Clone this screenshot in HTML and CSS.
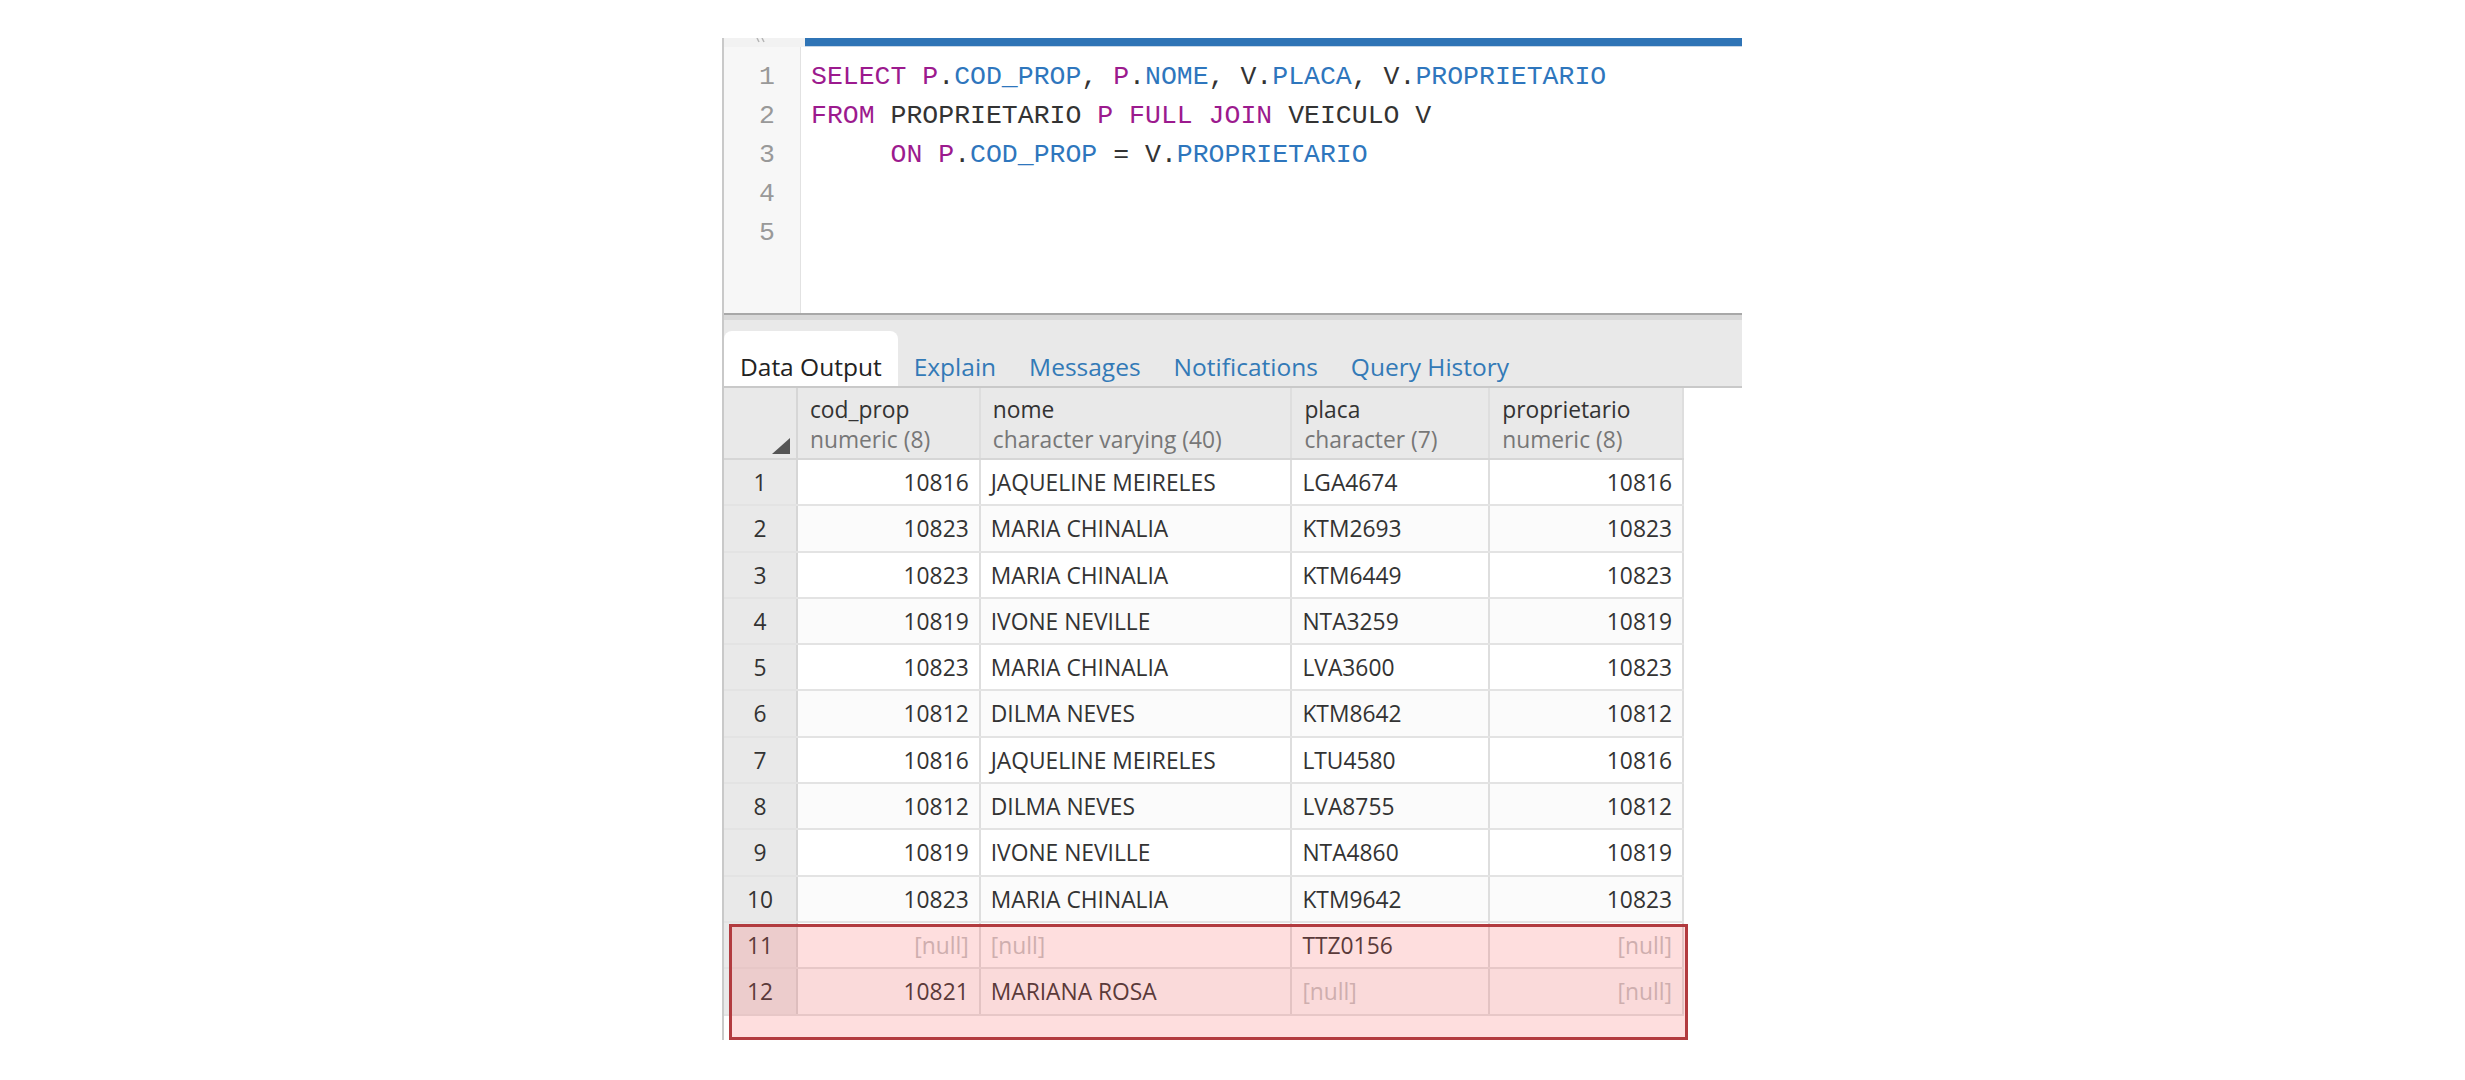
FILE: index.html
```html
<!DOCTYPE html>
<html>
<head>
<meta charset="utf-8">
<link rel="stylesheet" href="styles.css">
</head>
<body>
<div class="panel">
  <div class="editor-top">
    <div class="top-gutter">
      <svg class="collapse" width="12" height="6" viewBox="0 0 12 6"><path d="M1 0 L3 4 M6 0 L8 4" stroke="#b5b5b5" stroke-width="1.5" fill="none"/></svg>
    </div>
    <div class="top-bar"></div>
  </div>
  <div class="editor">
    <div class="gutter">
      <div class="ln">1</div>
      <div class="ln">2</div>
      <div class="ln">3</div>
      <div class="ln">4</div>
      <div class="ln">5</div>
    </div>
    <div class="code">
      <div class="line"><span class="kw">SELECT</span> <span class="kw">P</span>.<span class="col">COD_PROP</span>, <span class="kw">P</span>.<span class="col">NOME</span>, V.<span class="col">PLACA</span>, V.<span class="col">PROPRIETARIO</span></div>
      <div class="line"><span class="kw">FROM</span> PROPRIETARIO <span class="kw">P</span> <span class="kw">FULL</span> <span class="kw">JOIN</span> VEICULO V</div>
      <div class="line">     <span class="kw">ON</span> <span class="kw">P</span>.<span class="col">COD_PROP</span> = V.<span class="col">PROPRIETARIO</span></div>
      <div class="line"></div>
      <div class="line"></div>
    </div>
  </div>
  <div class="divider"></div>
  <div class="tabs">
    <div class="tab active">Data Output</div>
    <div class="tab">Explain</div>
    <div class="tab">Messages</div>
    <div class="tab">Notifications</div>
    <div class="tab">Query History</div>
  </div>
  <div class="grid">
    <div class="row head">
      <div class="cell num corner"><span class="tri"></span></div>
      <div class="cell c1"><div class="hname">cod_prop</div><div class="htype">numeric (8)</div></div>
      <div class="cell c2"><div class="hname">nome</div><div class="htype">character varying (40)</div></div>
      <div class="cell c3"><div class="hname">placa</div><div class="htype">character (7)</div></div>
      <div class="cell c4"><div class="hname">proprietario</div><div class="htype">numeric (8)</div></div>
    </div>
    <div class="row"><div class="cell num">1</div><div class="cell c1 r">10816</div><div class="cell c2">JAQUELINE MEIRELES</div><div class="cell c3">LGA4674</div><div class="cell c4 r">10816</div></div>
    <div class="row even"><div class="cell num">2</div><div class="cell c1 r">10823</div><div class="cell c2">MARIA CHINALIA</div><div class="cell c3">KTM2693</div><div class="cell c4 r">10823</div></div>
    <div class="row"><div class="cell num">3</div><div class="cell c1 r">10823</div><div class="cell c2">MARIA CHINALIA</div><div class="cell c3">KTM6449</div><div class="cell c4 r">10823</div></div>
    <div class="row even"><div class="cell num">4</div><div class="cell c1 r">10819</div><div class="cell c2">IVONE NEVILLE</div><div class="cell c3">NTA3259</div><div class="cell c4 r">10819</div></div>
    <div class="row"><div class="cell num">5</div><div class="cell c1 r">10823</div><div class="cell c2">MARIA CHINALIA</div><div class="cell c3">LVA3600</div><div class="cell c4 r">10823</div></div>
    <div class="row even"><div class="cell num">6</div><div class="cell c1 r">10812</div><div class="cell c2">DILMA NEVES</div><div class="cell c3">KTM8642</div><div class="cell c4 r">10812</div></div>
    <div class="row"><div class="cell num">7</div><div class="cell c1 r">10816</div><div class="cell c2">JAQUELINE MEIRELES</div><div class="cell c3">LTU4580</div><div class="cell c4 r">10816</div></div>
    <div class="row even"><div class="cell num">8</div><div class="cell c1 r">10812</div><div class="cell c2">DILMA NEVES</div><div class="cell c3">LVA8755</div><div class="cell c4 r">10812</div></div>
    <div class="row"><div class="cell num">9</div><div class="cell c1 r">10819</div><div class="cell c2">IVONE NEVILLE</div><div class="cell c3">NTA4860</div><div class="cell c4 r">10819</div></div>
    <div class="row even"><div class="cell num">10</div><div class="cell c1 r">10823</div><div class="cell c2">MARIA CHINALIA</div><div class="cell c3">KTM9642</div><div class="cell c4 r">10823</div></div>
    <div class="row"><div class="cell num">11</div><div class="cell c1 r null">[null]</div><div class="cell c2 null">[null]</div><div class="cell c3">TTZ0156</div><div class="cell c4 r null">[null]</div></div>
    <div class="row even"><div class="cell num">12</div><div class="cell c1 r">10821</div><div class="cell c2">MARIANA ROSA</div><div class="cell c3 null">[null]</div><div class="cell c4 r null">[null]</div></div>
  </div>
  <div class="highlight"></div>
</div>
</body>
</html>
```
FILE: styles.css
```css
html, body {
  margin: 0;
  padding: 0;
  background: #ffffff;
}
body {
  font-family: "Open Sans", "Liberation Sans", sans-serif;
  color: #333;
}
.panel {
  position: relative;
  margin-left: 722px;
  margin-top: 38px;
  width: 1018px;
  height: 1002px;
  border-left: 2px solid #c9c9c9;
}
.editor-top {
  display: flex;
  height: 9px;
}
.top-gutter {
  width: 81px;
  background: #f2f2f2;
  overflow: hidden;
}
.collapse {
  display: block;
  margin-left: 32px;
}
.top-bar {
  flex: 1;
  background: #2f74b6;
  border-bottom: 1px solid #c7d6e6;
}
.editor {
  display: flex;
  height: 266px;
}
.gutter {
  width: 76px;
  background: #f7f7f7;
  border-right: 1px solid #e2e2e2;
  padding-top: 11px;
}
.ln {
  font-family: "Liberation Mono", monospace;
  font-size: 26.5px;
  line-height: 39px;
  height: 39px;
  color: #999;
  text-align: right;
  padding-right: 25px;
}
.code {
  flex: 1;
  padding-top: 11px;
  padding-left: 10px;
  font-family: "Liberation Mono", monospace;
  font-size: 26.5px;
  color: #333;
}
.line {
  height: 39px;
  line-height: 39px;
  white-space: pre;
}
.kw {
  color: #9c1a8e;
}
.col {
  color: #2e76bd;
}
.divider {
  height: 5px;
  border-top: 2px solid #a8a8a8;
  background: #d9d9d9;
}
.tabs {
  display: flex;
  align-items: flex-end;
  height: 68px;
  background: #e9e9e9;
  border-bottom: 2px solid #c9c9c9;
  box-sizing: border-box;
}
.tab {
  font-size: 24.5px;
  color: #337ab7;
  height: 55px;
  box-sizing: border-box;
  padding: 19px 16px 0;
  margin-right: 1px;
  line-height: 33px;
  white-space: nowrap;
}
.tab.active {
  background: #fff;
  color: #222;
  border-radius: 8px 8px 0 0;
  margin-right: 0;
}
.grid {
  width: 960px;
}
.row {
  display: flex;
  height: 46.3px;
  box-sizing: border-box;
  border-bottom: 2px solid #e3e3e3;
  background: #fff;
}
.row.even {
  background: #fbfbfb;
}
.row.head {
  height: 72px;
  background: #e9e9e9;
  border-bottom: 2px solid #d6d6d6;
}
.cell {
  box-sizing: border-box;
  border-right: 2px solid #dedede;
  font-size: 22.8px;
  line-height: 46px;
  padding: 0 10px;
  white-space: nowrap;
  overflow: hidden;
}
.cell.num {
  width: 74px;
  background: #e9e9e9;
  text-align: center;
  border-right: 2px solid #d6d6d6;
  padding: 0;
}
.corner {
  position: relative;
}
.tri {
  position: absolute;
  right: 6px;
  bottom: 4px;
  width: 0;
  height: 0;
  border-left: 18px solid transparent;
  border-bottom: 16px solid #555;
}
.c1 { width: 183px; }
.c2 { width: 312px; }
.c3 { width: 198px; }
.c4 { width: 194px; }
.r { text-align: right; }
.head .cell {
  padding-left: 12px;
  line-height: 30px;
  padding-top: 7px;
}
.hname {
  color: #333;
}
.htype {
  color: #777;
}
.null {
  color: #c4c4c4;
}
.highlight {
  position: absolute;
  left: 5px;
  top: 886px;
  width: 959px;
  height: 116px;
  box-sizing: border-box;
  border: 3px solid #b23b3f;
  background: rgba(248, 90, 90, 0.2);
}
```
